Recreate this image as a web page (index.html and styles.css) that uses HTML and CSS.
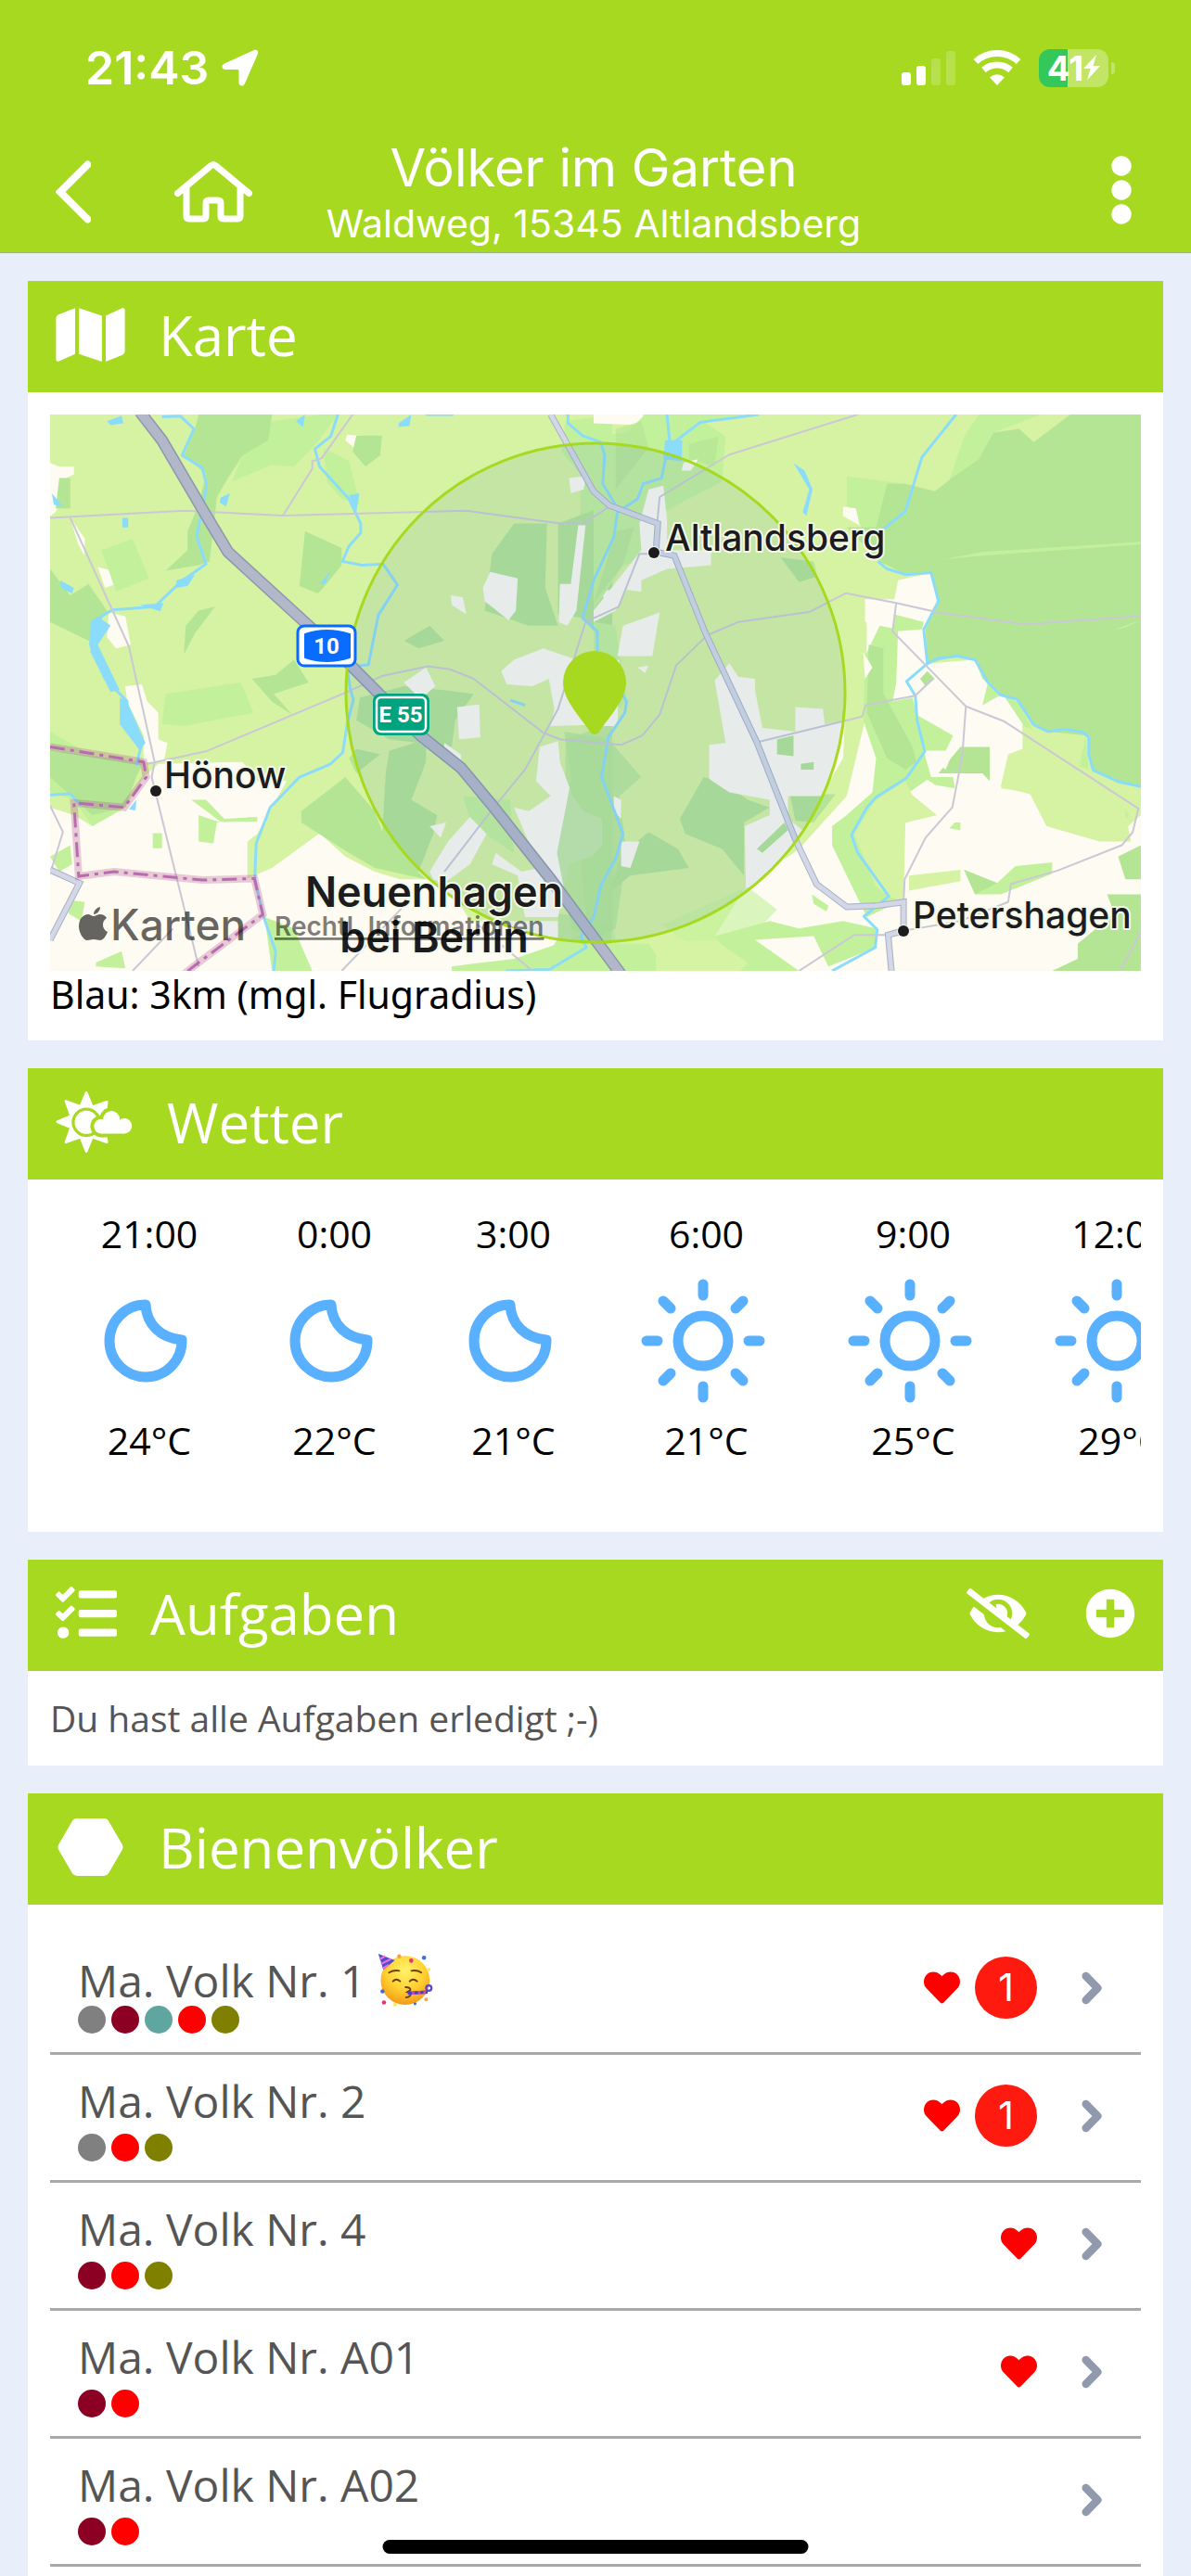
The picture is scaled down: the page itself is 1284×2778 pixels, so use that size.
FILE: index.html
```html
<!DOCTYPE html>
<html lang="de">
<head>
  <meta charset="UTF-8" />
  <meta name="viewport" content="width=device-width, initial-scale=1.0"/>
  <title>Völker im Garten</title>
  <link rel="stylesheet" href="styles.css">
</head>
<body>

<!-- Icons used more than once -->
<svg class="sprite" aria-hidden="true">
  <symbol id="heart" viewBox="0 0 512 512">
    <path d="M462.3 62.6C407.5 15.9 326 24.3 275.7 76.2L256 96.5l-19.7-20.3C186.1 24.3 104.5 15.9 49.7 62.6c-62.8 53.6-66.1 149.8-9.9 207.9l193.5 199.8c12.5 12.9 32.8 12.9 45.3 0l193.5-199.8c56.3-58.1 53-154.3-9.8-207.9z"/>
  </symbol>
  <symbol id="chevron" viewBox="0 0 320 512">
    <path d="M82 96L238 256 82 416" fill="none" stroke="#9199ad" stroke-width="104" stroke-linecap="round" stroke-linejoin="round"/>
  </symbol>
  <symbol id="moon" viewBox="0 0 134 134">
    <path d="M67 28A39 39 0 1 0 106 66C84 64 68 50 67 28Z" fill="none" stroke="#58b0ff" stroke-width="11" stroke-linejoin="round"/>
  </symbol>
  <symbol id="sun" viewBox="0 0 134 134">
    <g fill="none" stroke="#58b0ff" stroke-width="11" stroke-linecap="round">
      <circle cx="67" cy="67" r="27"/>
      <path d="M67 6v12M67 116v12M6 67h12M116 67h12M24 24l8 8M102 102l8 8M110 24l-8 8M32 102l-8 8"/>
    </g>
  </symbol>
</svg>

<!-- Header -->
<header class="header">
  <div class="status-bar">
    <div class="status-left">
      <span class="time">21:43</span>
      <svg width="40" height="40" viewBox="0 0 40 40" fill="#fff"><path d="M35 1L3 15.500C-1 17.500 0 22 4 22h13c1 0 1.500.5 1.500 1.500V36c0 4 4.500 5 6.500 1L39 5c1-3-1-5-4-4z"/></svg>
    </div>
    <div class="status-right">
      <svg width="58" height="38" viewBox="0 0 58 38" fill="#fff">
        <rect y="24" width="10" height="14" rx="3"/>
        <rect x="16" y="17" width="10" height="21" rx="3"/>
        <rect x="32" y="9" width="10" height="29" rx="3" opacity=".2"/>
        <rect x="48" y="1" width="10" height="37" rx="3" opacity=".2"/>
      </svg>
      <svg width="52" height="38" viewBox="0 0 52 38" fill="none" stroke="#fff" stroke-width="7">
        <path d="M3 12.500A34 34 0 0 1 49 12.500M11.500 21.500A22 22 0 0 1 40.500 21.500"/>
        <path d="M18 29.500Q26 23 34 29.500L26 38z" fill="#fff" stroke="none"/>
      </svg>
      <div class="battery"><span>41</span><svg width="18" height="28" viewBox="0 0 18 28" fill="#fff"><path d="M14 0L0 15h7.500L4 27.500 18 12h-7.500z"/></svg></div>
    </div>
  </div>
  <div class="nav">
    <div class="nav-left">
      <button class="icon-btn" aria-label="Zurück">
        <svg width="38" height="68" viewBox="0 0 38 68"><path d="M34.500 4.500L5 34l29.500 29.500" fill="none" stroke="#fff" stroke-width="8" stroke-linecap="round"/></svg>
      </button>
      <button class="icon-btn" aria-label="Startseite">
        <svg width="84" height="68" viewBox="0 0 84 68" fill="none" stroke="#fff" stroke-width="7" stroke-linecap="round" stroke-linejoin="round"><path d="M3.500 35.500L39 6q3-3 6 0l35.500 29.500M13 30v30q0 3 3 3h15q3 0 3-3V46q0-3 3-3h10q3 0 3 3v14q0 3 3 3h15q3 0 3-3V30"/></svg>
      </button>
    </div>
    <div class="nav-title">
      <h1>Völker im Garten</h1>
      <p>Waldweg, 15345 Altlandsberg</p>
    </div>
    <div class="nav-right">
      <button class="icon-btn" aria-label="Menü">
        <svg width="22" height="74" viewBox="0 0 22 74" fill="#fff"><circle cx="11" cy="11" r="10.700"/><circle cx="11" cy="37" r="10.700"/><circle cx="11" cy="63" r="10.700"/></svg>
      </button>
    </div>
  </div>
</header>

<main class="content">

  <!-- Karte -->
  <section class="card">
    <div class="card-header">
      <svg width="75" height="66" viewBox="0 0 576 512" fill="#fff"><path d="M0 117.660v346.320c0 11.320 11.430 19.060 21.940 14.860L160 416V32L20.120 87.950A32.006 32.006 0 0 0 0 117.660zM192 416l192 64V96L192 32v384zM554.060 33.160L416 96v384l139.880-55.950A31.996 31.996 0 0 0 576 394.340V48.020c0-11.320-11.430-19.060-21.940-14.860z"/></svg>
      <h2>Karte</h2>
    </div>
    <div class="card-body map-body">
      <svg class="map" viewBox="0 0 1176 600">
        <rect width="1176" height="600" fill="#d6f3a3"/>

        <!-- Land, west -->
        <g transform="scale(.3954 .4082) translate(-35 -42)">
          <g fill="#fdfbf2">
            <path d="M35 1080L100 1100 150 1130 240 1080 290 1000 330 965 560 960 600 1010 680 1010 640 1080 600 1150 573 1170 573 1268 640 1240 770 1148 840 1210 920 1250 990 1270 1060 1270 1130 1300 1180 1380 1420 1380 1420 1512 35 1512z"/>
            <path d="M240 760L285 755 300 800 330 830 330 900 355 910 345 960 290 960 290 890 245 800z"/>
            <path d="M35 170L60 180 100 180 100 200 70 215 88 230 50 300 35 310zM845 95L905 100 900 145 875 140 840 110zM165 445L205 455 215 490 185 500zM195 565L240 575 255 650 215 660 190 630zM90 315L130 370 128 415 110 380z"/>
          </g>
          <g fill="#c3f19b">
            <path d="M560 150L640 60 770 42 820 42 760 120 700 180 640 175 530 220zM175 400L260 370 305 475 215 510zM350 780L555 750 590 830 400 865 340 860zM35 880L180 960 140 940 200 970 280 960 240 1080 150 1130 100 1060 35 1040z"/>
            <path d="M780 130L850 165 880 280 830 265 790 220zM440 1100L500 1120 580 1105 600 1115 490 1120 480 1175 440 1170zM420 1060L460 1060 510 1110 600 1105 600 1118 500 1118zM315 1148H340V1188H315zM35 1210L90 1180 95 1230 60 1250zM160 1490L230 1460 240 1505 160 1500zM90 1325L130 1330 120 1380 85 1360zM1130 1500L1300 1480 1420 1440 1568 1380 1590 1512 1130 1512zM620 1370L700 1400 750 1512 640 1512z"/>
            <path d="M1440 60L1568 42 1568 350 1480 330 1480 200 1430 140zM1160 1050L1290 1060 1300 1200 1220 1150 1180 1110z"/>
          </g>
          <g fill="#b3e595">
            <path d="M400 150L430 80 440 42 640 42 630 110 560 150 520 210 490 260 470 430 440 440 350 455 410 400 410 350 440 280 460 200zM35 450L90 520 140 490 190 560 140 640 35 590zM730 350L830 395 830 440 780 500 765 515 715 495zM400 675L405 600 440 560 485 550 430 620zM585 740L650 730 700 690 740 750 645 780 695 835 640 800zM870 98L940 98 935 150 895 180 860 140zM60 210L90 210 90 290 50 290z"/>
            <path d="M35 930L290 960 270 1000 240 1080 150 1100 35 1000zM720 1090L840 1000 920 1090 950 1170 1060 1270 920 1240 850 1200 720 1120zM850 950L870 925 935 940 870 990zM950 990L960 930 1060 900 1060 960 1020 1060 1090 1100 1080 1150 1040 1250 1000 1230 940 1160zM880 790L1000 760 1110 770 1190 780 1140 850 1130 920 960 900 870 850zM1300 330L1390 330 1385 500 1420 600 1340 600 1220 560 1240 410zM1420 330L1530 290 1568 300 1568 680 1490 580 1420 570zM1000 640L1070 600 1110 640 1040 660z"/>
            <path d="M1530 870L1568 860V1400L1500 1400 1470 1090 1440 1040 1440 900zM1420 1360L1568 1380 1560 1500 1420 1512z" opacity=".7"/>
          </g>
          <g fill="#fdfbf2">
            <path d="M1215 500L1235 458 1310 475 1305 560 1285 585 1220 535zM1128 520L1160 525 1170 570 1130 545zM1475 335L1495 335 1470 560 1445 600 1422 590 1425 490 1455 490zM1265 720L1300 690 1380 660 1470 690 1568 860 1400 865 1410 820 1395 740 1350 760 1280 755zM1145 815L1205 808 1208 895 1150 900zM1000 750L1060 710 1085 760 1045 795zM1450 210L1495 205 1490 240 1455 250zM1525 510L1560 505 1550 530zM1110 910L1155 940 1155 970 1110 950z"/>
            <path d="M1370 920L1420 905 1425 960 1460 1050 1490 1090 1540 1110 1540 1180 1510 1210 1450 1230 1420 1370 1330 1370 1310 1260 1240 1230 1250 1200 1320 1250 1370 1240 1300 1080 1340 1090 1400 1050 1360 1010zM1070 1250L1120 1170 1180 1105 1225 1150 1180 1230 1110 1280 1080 1270zM1070 1130L1115 1120 1100 1160z"/>
          </g>
          <g fill="#8bdcfb">
            <path d="M190 60L230 45 235 65 200 70zM705 60L730 42 725 75zM985 65L1020 42 1015 72 985 75zM850 255L878 250 870 300zM500 262L525 250 515 285 498 275zM40 250L70 285 45 280zM232 315H248V340H232zM62 480L100 500 95 515 65 500zM770 490L800 455 785 490zM225 790L245 800 295 910 280 930 225 860zM380 480L430 465 410 495 380 500zM145 590L165 575 200 600 165 650 225 770 200 775 145 670zM250 1085L270 1060 268 1088zM280 545L345 540 335 562z"/>
          </g>
        </g>

        <!-- Land, east -->
        <g transform="translate(586 0) scale(.3954 .4082) translate(0 -42)">
          <path d="M830 480L920 460 940 535 905 610 910 700 1040 690 1110 780 1155 795 1170 860 1170 930 1110 1030 1190 1040 1240 1130 1410 1170 1492 1100 1492 1512 560 1512 400 1490 330 1420 415 1290 560 1190 690 1050 740 850 745 610 740 530 820 530z" fill="#fdfbf2"/>
          <path d="M0 42H135V70L0 65z" fill="#fdfbf2"/>
          <g fill="#c3f19b">
            <path d="M0 100L90 90 140 42 420 42 300 60 360 100 350 220 190 300 190 420 80 440 0 560zM690 205L850 225 850 300 790 340 740 350 690 280zM970 215L1010 100 1050 42 1220 42 1090 90 1060 160 1000 215zM740 680L780 600 830 610 825 750 815 800 870 790 880 835 980 890 960 930 900 930 920 1000 860 1040 935 1100 850 1120 830 1330 745 1370 650 1180 650 1130 690 1100 760 1040 770 950 735 850zM820 570L900 590 895 610 815 615zM1040 690L1075 750 1060 810 1115 780 1170 860 1170 880 1250 890 1340 890 1350 980 1320 970 1340 910 1200 880 1155 800 1110 783 1060 740zM0 590L60 600 75 700 90 800 0 880z"/>
            <path d="M900 1000L980 1000 985 1030 930 1020zM1010 1245L1100 1280 1150 1235 1250 1225 1250 1255 1110 1310 1040 1310zM595 1310L640 1340 635 1355 600 1335zM450 1400L490 1395 495 1420 460 1425zM-150 1512L-100 1430 0 1440 150 1440 200 1512zM330 1420L480 1380 560 1400 680 1380 770 1400 770 1450 640 1500 600 1420 440 1430 560 1512 400 1512zM1330 1070L1400 1030 1460 1100 1430 1140 1340 1080zM1000 1120L985 1120 970 1135 1000 1140z"/>
            <path d="M185 1390L420 1290 500 1350 430 1420 260 1440z" opacity=".6"/>
          </g>
          <g fill="#d6f3a3">
            <path d="M850 1120L845 1330 805 1315 770 1290 710 1150 770 1060 850 1010 870 1050 935 1100zM1130 940L1170 925 1170 865 1240 885 1340 890 1325 970 1440 1050 1465 1170 1380 1170 1235 1130 1190 1045 1110 1025zM860 1260L1000 1245 1000 1275 860 1300zM170 1440L330 1430 420 1490 400 1512 170 1512z"/>
          </g>
          <g fill="#b3e595">
            <path d="M800 225L850 225 930 245 970 215 1050 160 1090 90 1160 80 1200 115 1300 42 1492 42 1492 1025 1430 1010 1360 980 1345 890 1240 880 1200 865 1155 795 1110 780 1070 740 1040 690 990 680 910 700 905 610 940 535 920 460 850 465 780 430 690 340 770 340z"/>
            <path d="M750 650L790 660 790 780 870 920 880 960 850 980 800 950 745 830zM1080 920L1080 1010 1060 990 940 990 1000 920zM1492 1310L1400 1310 1420 1360 1320 1440 1320 1480 1250 1512 1492 1512zM1492 1180L1430 1210 1450 1270 1492 1270zM1010 1245L1100 1280 1040 1310zM235 1110L300 1000 350 1010 420 1060 480 1080 410 1120 410 1260 350 1190 250 1150zM50 1280L80 1200 150 1145 230 1190 260 1240 100 1260 50 1300zM445 1190L520 1120 530 1140 460 1200zM535 1045L660 1045 600 1120 550 1115zM510 420L600 430 610 470 560 485z"/>
            <path d="M-80 880L40 900 130 1000 70 1050 90 1200 60 1400 0 1430 -60 1400 -100 1200 -60 1000z" opacity=".8"/>
            <path d="M60 80L130 60 150 130 60 240zM260 120L340 100 330 180 260 160zM60 350L110 340 80 440 0 540z" opacity=".6"/>
          </g>
          <g fill="#fdfbf2">
            <path d="M330 745L370 700 395 735 440 740 440 770 460 870 550 880 550 815 625 820 630 860 685 850 680 950 620 1050 530 1050 530 1110 570 1140 510 1230 415 1290 412 1130 480 1100 480 1060 370 1040 315 1005 315 915 360 910zM150 240L190 230 200 320 200 400 320 400 320 440 200 450 130 480 130 510 90 505 60 560 0 590 0 560 130 400 125 330zM80 600L180 565 160 680 65 680zM75 1170L125 1170 100 1240 75 1235zM55 1050L75 1060 75 1110 55 1090zM245 170L285 160 265 190 240 190zM680 285L715 290 725 335 680 310zM740 530L780 540 815 570 815 600 740 590zM735 670L760 710 740 740zM0 700L70 690 65 865 0 865zM120 710L150 705 140 725z"/>
            <path d="M945 970L975 915 980 930 960 980z"/>
          </g>
          <path d="M500 900L545 890 545 945 500 940zM565 965L600 960 600 980 565 980zM445 1190L520 1120 530 1140 460 1200zM890 740L910 720 930 740 905 760z" fill="#b3e595"/>
          <path d="M955 425L1060 405 1492 378 1492 385 1060 415zM1420 610L1492 585 1450 605z" fill="#c3f19b"/>
          <path d="M195 110L242 110 240 165 190 160zM545 170L575 190 597 240 580 310 570 300 588 240z" fill="#8bdcfb"/>
        </g>

        <!-- Rivers -->
        <g class="river" transform="scale(.3954 .4082) translate(-35 -42)">
          <path d="M340 48L390 46 427 80 395 150 450 183 462 230 435 365 460 437 390 485 320 550 205 558 150 590 145 650 185 740 245 800 240 860 285 910 270 970"/>
          <path d="M820 42L800 100 757 133 770 180 850 265 882 330 882 355 850 390 832 430 885 440 943 437 982 492 930 572 903 703 845 710 853 765 862 795 845 860 833 935 800 965 715 1000 635 1080 597 1175 593 1268 615 1363 650 1460 645 1512"/>
          <path d="M35 1047L90 1044 120 1075M1290 797L1330 810M1060 42H1135"/>
        </g>
        <g class="river" transform="translate(586 0) scale(.3954 .4082) translate(0 -42)">
          <path d="M200 42L207 110 185 210 135 225 120 265 65 300 55 365 0 480 -30 580 10 615 10 680 90 800 85 830 40 895 22 1000 80 1150 60 1215 20 1285 0 1370 -35 1420 -20 1450 -120 1508 -240 1512"/>
          <path d="M450 42L290 63 220 115M-70 42L-70 65 -30 98 20 115 30 150 25 225 65 290M988 42L895 155 850 298 790 345M775 430L800 450 850 465 920 460 940 535 900 610 910 700 940 686 992 680 1040 690 1075 750 1110 783 1155 795 1200 862 1240 880 1285 873 1335 882 1350 895 1350 940 1362 982 1430 1012 1492 1025"/>
          <path d="M910 700L853 747 877 785 882 850 903 932 852 1003 770 1053 745 1080 703 1153 720 1200 805 1315 737 1368 773 1403 768 1450 650 1512"/>
        </g>

        <!-- Roads -->
        <g class="road" transform="scale(.3954 .4082) translate(-35 -42)">
          <path d="M35 315L400 296 670 309 1170 296 1425 330 1495 327 1560 285M860 42L775 158 750 165 750 185 670 309M90 315L250 655 320 960 312 1000 440 1500M300 965L460 932 845 775 940 733 1065 707 1125 715 1190 740 1380 883 1425 900 1592 915"/>
          <path d="M35 1075L70 1145 40 1240M995 1345L830 1512M1200 1390L1350 1512M370 1400L260 1512M1495 590L1420 820 1330 980 1245 1080 1110 1250"/>
        </g>
        <g class="road" transform="translate(586 0) scale(.3954 .4082) translate(0 -42)">
          <path d="M75 915L133 890 180 835 225 705 310 625 395 590 590 563 688 514 825 540 940 565 1175 596 1492 574M825 540L815 615 1015 813 1120 853 1485 1083 1470 1145 1440 1180 1265 1247 1138 1282 1130 1330 1000 1380 850 1405M1015 813L1005 945 978 1080 905 1160 848 1270 845 1330"/>
          <path d="M445 908L732 840 742 810 877 785 925 740M720 42L370 148 180 260 173 330M165 410L125 410 68 550 0 580 -22 590M845 1417H710L560 1512M1492 1410L1435 1512"/>
        </g>
        <g class="main-road" transform="scale(.3954 .4082) translate(-35 -42)">
          <path id="b1" d="M35 1245L115 1280 35 1430"/>
          <path id="b2" d="M1400 42L1517 245 1560 282 1692 330 1687 405 1737 415 1822 620 1962 908 2067 1165 2125 1283 2207 1343 2287 1340 2362 1330 2362 1405 2320 1417 2329 1512"/>
        </g>
        <g class="main-road-fill" transform="scale(.3954 .4082) translate(-35 -42)">
          <use href="#b1"/><use href="#b2"/>
        </g>
        <g transform="scale(.3954 .4082) translate(-35 -42)">
          <path class="motorway" d="M280 35L340 110 455 300 520 405 740 600 850 700 1045 890 1155 975 1245 1080 1400 1270 1568 1490 1600 1532"/>
          <path class="motorway-fill" d="M280 35L340 110 455 300 520 405 740 600 850 700 1045 890 1155 975 1245 1080 1400 1270 1568 1490 1600 1532"/>
          <path class="border-glow" d="M35 920L290 960 297 1000 237 1080 100 1068 113 1262 210 1250 450 1272 592 1268 615 1363 440 1490 400 1520"/>
          <path class="border-line" d="M35 920L290 960 297 1000 237 1080 100 1068 113 1262 210 1250 450 1272 592 1268 615 1363 440 1490 400 1520"/>
        </g>

        <!-- Flight radius -->
        <circle cx="588" cy="300" r="269" fill="#558abc" fill-opacity=".13" stroke="#a6d920" stroke-width="3"/>

        <!-- Road signs -->
        <rect x="267" y="228" width="62" height="43" rx="7" fill="#fff" stroke="#0a6cff" stroke-width="3"/>
        <path d="M275 237Q298 229 323 237V262Q298 270 275 262z" fill="#0a6cff" stroke="#0a6cff" stroke-width="2" stroke-linejoin="round"/>
        <text class="sign" x="298" y="258">10</text>
        <rect x="348" y="301" width="61" height="45" rx="8" fill="#00a37f"/>
        <rect x="352" y="305" width="53" height="37" rx="5" fill="none" stroke="#fff" stroke-width="2.500"/>
        <text class="sign" x="378" y="332">E 55</text>

        <!-- Places -->
        <g class="place">
          <circle cx="114" cy="406" r="6"/><text x="123" y="403">Hönow</text>
          <circle cx="651" cy="149" r="6"/><text x="663" y="147">Altlandsberg</text>
          <circle cx="920" cy="557" r="6"/><text x="930" y="554">Petershagen</text>
        </g>
        <g class="town">
          <text x="414" y="531">Neuenhagen</text>
          <text x="414" y="580">bei Berlin</text>
        </g>

        <!-- Marker -->
        <path d="M587 345c-2 0-4-1-5-3-9-14-29-34-29-53a34 34 0 0 1 68 0c0 19-20 39-29 53-1 2-3 3-5 3z" fill="#a6d920"/>

        <!-- Attribution -->
        <g class="attribution">
          <path d="M54 531c0 4-3 8-7 8 0-4 3-7 7-8zM47 541c2 0 4-2 7-2 3 0 5 1 7 4-6 4-5 12 1 15-2 5-5 9-8 9s-4-1-7-1-4 1-7 1c-4 0-9-8-9-15 0-8 5-13 10-13 2 0 4 2 6 2z"/>
          <text x="65" y="567" class="brand">Karten</text>
          <a href="#"><text x="242" y="562" class="legal">Rechtl. Informationen</text></a>
        </g>
      </svg>
      <p class="map-caption">Blau: 3km (mgl. Flugradius)</p>
    </div>
  </section>

  <!-- Wetter -->
  <section class="card">
    <div class="card-header">
      <svg width="84" height="66" viewBox="30 77 252 200">
        <path d="M129 81l19 47 48-17-5 40v48l5 44-48-17-19 47-19-47-48 17 17-48-45-19 45-19-17-48 48 17z" fill="#fff" stroke="#fff" stroke-width="8" stroke-linejoin="round"/>
        <circle cx="129" cy="178" r="43" fill="#fff" stroke="#a6d920" stroke-width="10"/>
        <g fill="#a6d920"><circle cx="211" cy="168" r="39"/><circle cx="178" cy="191" r="36"/><path d="M178 190h80v37h-80z"/></g>
        <g fill="#fff"><circle cx="211" cy="168" r="27"/><circle cx="178" cy="191" r="24"/><circle cx="253" cy="190" r="25"/><path d="M178 180h75v35h-75z"/></g>
      </svg>
      <h2>Wetter</h2>
    </div>
    <div class="card-body weather-body">
      <div class="forecast">
        <div class="hour first"><span>21:00</span><svg><use href="#moon"/></svg><span>24°C</span></div>
        <div class="hour"><span>0:00</span><svg><use href="#moon"/></svg><span>22°C</span></div>
        <div class="hour"><span>3:00</span><svg><use href="#moon"/></svg><span>21°C</span></div>
        <div class="hour day"><span>6:00</span><svg><use href="#sun"/></svg><span>21°C</span></div>
        <div class="hour day"><span>9:00</span><svg><use href="#sun"/></svg><span>25°C</span></div>
        <div class="hour day"><span>12:00</span><svg><use href="#sun"/></svg><span>29°C</span></div>
      </div>
    </div>
  </section>

  <!-- Aufgaben -->
  <section class="card">
    <div class="card-header">
      <svg width="66" height="66" viewBox="0 0 512 512" fill="#fff"><path d="M139.610 35.500a12 12 0 0 0-17 0L58.930 98.810l-22.700-22.120a12 12 0 0 0-17 0L3.530 92.410a12 12 0 0 0 0 17l47.590 47.400a12.780 12.780 0 0 0 17.610 0l15.590-15.620L156.520 69a12.090 12.090 0 0 0 .09-17zm0 159.190a12 12 0 0 0-17 0l-63.680 63.720-22.700-22.100a12 12 0 0 0-17 0L3.530 252a12 12 0 0 0 0 17L51 316.500a12.770 12.770 0 0 0 17.600 0l15.700-15.690 72.200-72.220a12 12 0 0 0 .09-16.900zM64 368c-26.490 0-48.590 21.500-48.590 48S37.530 464 64 464a48 48 0 0 0 0-96zm432 16H208a16 16 0 0 0-16 16v32a16 16 0 0 0 16 16h288a16 16 0 0 0 16-16v-32a16 16 0 0 0-16-16zm0-320H208a16 16 0 0 0-16 16v32a16 16 0 0 0 16 16h288a16 16 0 0 0 16-16V80a16 16 0 0 0-16-16zm0 160H208a16 16 0 0 0-16 16v32a16 16 0 0 0 16 16h288a16 16 0 0 0 16-16v-32a16 16 0 0 0-16-16z"/></svg>
      <h2>Aufgaben</h2>
      <div class="card-actions">
        <button class="icon-btn" aria-label="Erledigte ausblenden">
          <svg width="68" height="54" viewBox="0 0 640 512" fill="#fff"><path d="M320 400c-75.850 0-137.250-58.710-142.900-133.110L72.200 185.820c-13.790 17.300-26.480 35.590-36.720 55.590a32.350 32.350 0 0 0 0 29.190C89.710 376.410 197.070 448 320 448c26.910 0 52.870-4 77.890-10.460L346 397.390a144.130 144.130 0 0 1-26 2.610zm313.820 58.100l-110.550-85.440a331.250 331.250 0 0 0 81.250-102.070 32.350 32.350 0 0 0 0-29.190C550.290 135.590 442.930 64 320 64a308.150 308.150 0 0 0-147.320 37.700L45.460 3.370A16 16 0 0 0 23 6.180L3.370 31.450A16 16 0 0 0 6.180 53.900l588.360 454.730a16 16 0 0 0 22.460-2.810l19.640-25.270a16 16 0 0 0-2.820-22.450zm-183.720-142l-39.300-30.380A94.750 94.750 0 0 0 416 256a94.760 94.760 0 0 0-121.310-92.210A47.650 47.650 0 0 1 304 192a46.640 46.640 0 0 1-1.540 10l-73.610-56.890A142.310 142.310 0 0 1 320 112a143.920 143.920 0 0 1 144 144c0 21.630-5.290 41.790-13.900 60.110z"/></svg>
        </button>
        <button class="icon-btn" aria-label="Aufgabe hinzufügen">
          <svg width="54" height="54" viewBox="0 0 512 512" fill="#fff"><path d="M256 8C119 8 8 119 8 256s111 248 248 248 248-111 248-248S393 8 256 8zm144 276c0 6.600-5.400 12-12 12h-92v92c0 6.600-5.400 12-12 12h-56c-6.600 0-12-5.400-12-12v-92h-92c-6.600 0-12-5.400-12-12v-56c0-6.600 5.400-12 12-12h92v-92c0-6.600 5.400-12 12-12h56c6.600 0 12 5.400 12 12v92h92c6.600 0 12 5.400 12 12v56z"/></svg>
        </button>
      </div>
    </div>
    <div class="card-body">
      <p class="empty">Du hast alle Aufgaben erledigt ;-)</p>
    </div>
  </section>

  <!-- Bienenvölker -->
  <section class="card card-last">
    <div class="card-header">
      <svg width="75" height="66" viewBox="0 0 576 512" fill="#fff"><path d="M441.500 39.800C432.900 25.100 417.100 16 400 16H176c-17.100 0-32.900 9.100-41.500 23.800l-112 192c-8.700 14.900-8.700 33.400 0 48.400l112 192c8.600 14.700 24.400 23.800 41.500 23.800h224c17.100 0 32.900-9.100 41.500-23.800l112-192c8.700-14.900 8.700-33.400 0-48.400l-112-192z"/></svg>
      <h2>Bienenvölker</h2>
    </div>
    <ul class="card-body colonies">
      <li>
        <a href="#" class="colony">
          <div>
            <div class="name party">Ma. Volk Nr. 1
              <svg class="emoji" width="60" height="58" viewBox="55 45 185 180">
                <defs><radialGradient id="face" cx=".5" cy=".3" r=".7"><stop offset="0" stop-color="#fff36b"/><stop offset=".55" stop-color="#ffd232"/><stop offset="1" stop-color="#f59a16"/></radialGradient></defs>
                <circle cx="147" cy="137" r="82" fill="url(#face)"/>
                <path d="M57 48L112 70 74 102z" fill="#4a4fd0"/>
                <path d="M62 66l18-10M66 82l34-17M72 97l20-12" stroke="#f06ad8" stroke-width="7"/>
                <g fill="none" stroke="#6b3f12" stroke-width="6" stroke-linecap="round"><path d="M93 111q15-9 34-6M168 105q19-3 33 6M106 140q11-12 24 0M162 140q11-12 25 0M148 160q18 0 16 10l-10 6q14 4 10 12-4 6-14 6"/></g>
                <path d="M156 180L222 176" stroke="#4740c8" stroke-width="11"/>
                <path d="M170 179h8M190 178h8M208 177h8" stroke="#d24bb5" stroke-width="11"/>
                <circle cx="226" cy="163" r="9" fill="none" stroke="#5548d0" stroke-width="7"/>
                <g fill="#e8366c"><circle cx="167" cy="71" r="7"/><circle cx="76" cy="211" r="7"/></g>
                <g fill="#3a6fd8"><circle cx="210" cy="61" r="7"/><circle cx="71" cy="174" r="7"/><circle cx="180" cy="215" r="5"/></g>
                <g fill="#ffe95a"><circle cx="226" cy="101" r="6"/><circle cx="113" cy="218" r="6"/></g>
                <g fill="#f7a04a"><circle cx="127" cy="57" r="7"/><circle cx="217" cy="201" r="6"/></g>
              </svg>
            </div>
            <div class="dots"><i class="gray"></i><i class="wine"></i><i class="teal"></i><i class="red"></i><i class="olive"></i></div>
          </div>
          <div class="marks"><svg class="heart"><use href="#heart"/></svg><span class="badge">1</span></div>
          <svg class="chevron"><use href="#chevron"/></svg>
        </a>
      </li>
      <li>
        <a href="#" class="colony">
          <div>
            <div class="name">Ma. Volk Nr. 2</div>
            <div class="dots"><i class="gray"></i><i class="red"></i><i class="olive"></i></div>
          </div>
          <div class="marks"><svg class="heart"><use href="#heart"/></svg><span class="badge">1</span></div>
          <svg class="chevron"><use href="#chevron"/></svg>
        </a>
      </li>
      <li>
        <a href="#" class="colony">
          <div>
            <div class="name">Ma. Volk Nr. 4</div>
            <div class="dots"><i class="wine"></i><i class="red"></i><i class="olive"></i></div>
          </div>
          <div class="marks"><svg class="heart"><use href="#heart"/></svg></div>
          <svg class="chevron"><use href="#chevron"/></svg>
        </a>
      </li>
      <li>
        <a href="#" class="colony">
          <div>
            <div class="name">Ma. Volk Nr. A01</div>
            <div class="dots"><i class="wine"></i><i class="red"></i></div>
          </div>
          <div class="marks"><svg class="heart"><use href="#heart"/></svg></div>
          <svg class="chevron"><use href="#chevron"/></svg>
        </a>
      </li>
      <li>
        <a href="#" class="colony">
          <div>
            <div class="name">Ma. Volk Nr. A02</div>
            <div class="dots"><i class="wine"></i><i class="red"></i></div>
          </div>
          <div class="marks"></div>
          <svg class="chevron"><use href="#chevron"/></svg>
        </a>
      </li>
    </ul>
  </section>
</main>

<div class="home-indicator"></div>

</body>
</html>
```

FILE: styles.css
```css
* {
  box-sizing: border-box;
}

body {
  margin: 0;
  min-height: 100vh;
  display: flex;
  flex-direction: column;
  background: #e8effa;
  color: #000;
  font-family: 'Open Sans', 'Noto Sans', sans-serif;
}

h1, h2, p, ul {
  margin: 0;
  padding: 0;
  font-weight: 400;
}

svg {
  display: block;
  flex: none;
}

.sprite {
  position: absolute;
  width: 0;
  height: 0;
}

.icon-btn {
  padding: 0;
  border: none;
  background: none;
  cursor: pointer;
}

/* Header */
.header {
  background: #a6d920;
  border-bottom: 1px solid #9cb08a;
  color: #fff;
  font-family: Inter, sans-serif;
}

.status-bar {
  display: flex;
  justify-content: space-between;
  align-items: center;
  height: 146px;
  padding: 0 82px 0 92px;
}

.status-left,
.status-right {
  display: flex;
  align-items: center;
}

.status-left {
  gap: 14px;
}

.status-right {
  gap: 19px;
}

.time {
  font-size: 50px;
  font-weight: 600;
}

.battery {
  position: relative;
  display: flex;
  align-items: center;
  justify-content: center;
  width: 75px;
  height: 41px;
  margin-right: 7px;
  border-radius: 12px;
  background: linear-gradient(to right, #34c759 41%, #c2e566 41%);
  font-size: 37px;
  font-weight: 700;
  line-height: 41px;
}

.battery::after {
  content: "";
  position: absolute;
  right: -7px;
  top: 14px;
  width: 4px;
  height: 13px;
  border-radius: 0 4px 4px 0;
  background: #c2e566;
}

.nav {
  display: grid;
  grid-template-columns: 1fr auto 1fr;
  align-items: center;
  height: 126px;
  padding: 0 64px 4px 60px;
}

.nav-left {
  display: flex;
  gap: 90px;
}

.nav-right {
  justify-self: end;
}

.nav-title {
  text-align: center;
}

.nav-title h1 {
  font-size: 56px;
  line-height: 68px;
}

.nav-title p {
  font-size: 41px;
  line-height: 52px;
}

/* Cards */
.content {
  flex: 1;
  display: flex;
  flex-direction: column;
  gap: 30px;
  padding: 30px 30px 0;
}

.card {
  background: #fff;
}

.card-last {
  flex: 1;
}

.card-header {
  display: flex;
  align-items: center;
  gap: 36px;
  height: 120px;
  padding: 0 30px 5px;
  background: #a6d920;
  color: #fff;
}

.card-header h2 {
  font-size: 60px;
  line-height: 82px;
}

.card-actions {
  display: flex;
  gap: 60px;
  margin-left: auto;
}

.card-body {
  padding: 24px;
}

/* Karte */
.map {
  width: 100%;
  height: auto;
}

.map-caption {
  font-family: 'Noto Sans', sans-serif;
  font-size: 41px;
  line-height: 51px;
}

.map path {
  vector-effect: non-scaling-stroke;
}

.river {
  fill: none;
  stroke: #8bdcfb;
  stroke-width: 3px;
  stroke-linejoin: round;
}

.road {
  fill: none;
  stroke: #cbc8d6;
  stroke-width: 2px;
  stroke-linejoin: round;
}

.main-road {
  fill: none;
  stroke: #a9b0c8;
  stroke-width: 7px;
}

.main-road-fill {
  fill: none;
  stroke: #d3d7e6;
  stroke-width: 5px;
}

.motorway {
  fill: none;
  stroke: #8e96ad;
  stroke-width: 13px;
}

.motorway-fill {
  fill: none;
  stroke: #b2b7c9;
  stroke-width: 10px;
}

.border-glow {
  fill: none;
  stroke: #b04a90;
  stroke-opacity: 0.28;
  stroke-width: 8px;
}

.border-line {
  fill: none;
  stroke: #b86bb0;
  stroke-width: 3px;
  stroke-dasharray: 16 6 4 6;
}

.sign {
  font-family: Roboto, sans-serif;
  font-size: 24px;
  font-weight: 700;
  fill: #fff;
  text-anchor: middle;
}

.place,
.town {
  font-family: Inter, sans-serif;
  fill: #1c1c1e;
  stroke: #f4f8ea;
  stroke-width: 4px;
  stroke-linejoin: round;
  paint-order: stroke;
}

.place {
  font-size: 39px;
  font-weight: 500;
}

.place circle {
  stroke-width: 2px;
}

.town {
  font-size: 45px;
  font-weight: 600;
  text-anchor: middle;
}

.attribution {
  font-family: Inter, sans-serif;
  fill: #000;
  fill-opacity: 0.6;
}

.brand {
  font-size: 46px;
  font-weight: 500;
}

.legal {
  font-size: 28px;
  font-weight: 600;
  fill-opacity: 0.5;
  text-decoration: underline;
}

/* Wetter */
.weather-body {
  padding: 30px 24px 70px;
}

.forecast {
  display: flex;
  overflow: hidden;
  padding-left: 4px;
}

.hour {
  flex: none;
  display: flex;
  flex-direction: column;
  align-items: center;
  width: 193px;
  font-size: 41px;
  line-height: 57px;
}

.hour.first {
  width: 206px;
}

.hour.day {
  width: 223px;
}

.hour svg {
  width: 134px;
  height: 134px;
  margin: 20px 8px 12px 0;
}

/* Aufgaben */
.empty {
  color: #555;
  font-size: 39px;
  line-height: 54px;
}

/* Bienenvölker */
.colonies {
  list-style: none;
}

.colony {
  display: flex;
  align-items: center;
  height: 138px;
  padding: 0 40px 4px 30px;
  border-bottom: 3px solid #a9a9a9;
  color: #555;
  text-decoration: none;
}

.name {
  height: 68px;
  font-size: 48px;
  line-height: 66px;
}

.name.party {
  line-height: 82px;
}

.emoji {
  display: inline-block;
  vertical-align: -10px;
}

.dots {
  display: flex;
  gap: 6px;
}

.dots i {
  width: 30px;
  height: 30px;
  border-radius: 50%;
}

.gray { background: #808080; }
.wine { background: #8b0023; }
.teal { background: #5fa5a0; }
.red { background: #ff0000; }
.olive { background: #808000; }

.marks {
  display: flex;
  align-items: center;
  gap: 16px;
  margin-left: auto;
  margin-right: 46px;
}

.heart {
  width: 39px;
  height: 39px;
  fill: #ff0000;
}

.badge {
  width: 67px;
  height: 67px;
  border-radius: 50%;
  background: #ff1a0f;
  color: #fff;
  font-family: Inter, sans-serif;
  font-size: 41px;
  line-height: 67px;
  text-align: center;
}

.chevron {
  width: 26px;
  height: 42px;
}

.home-indicator {
  position: fixed;
  left: 50%;
  bottom: 24px;
  width: 459px;
  height: 15px;
  border-radius: 8px;
  background: #000;
  transform: translateX(-50%);
}
```
